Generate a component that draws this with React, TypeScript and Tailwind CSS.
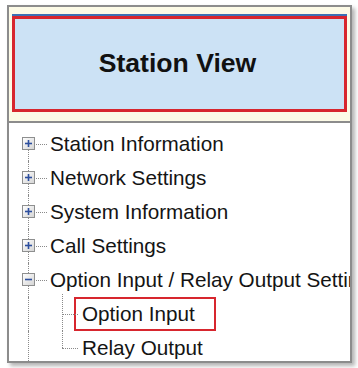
import React from "react";

type Node = { label: string; level: 0 | 1; state?: "plus" | "minus"; selected?: boolean; first?: boolean };

const nodes: Node[] = [
  { label: "Station Information", level: 0, state: "plus", first: true },
  { label: "Network Settings", level: 0, state: "plus" },
  { label: "System Information", level: 0, state: "plus" },
  { label: "Call Settings", level: 0, state: "plus" },
  { label: "Option Input / Relay Output Settings", level: 0, state: "minus" },
  { label: "Option Input", level: 1, selected: true },
  { label: "Relay Output", level: 1 },
];

const ExpandBox = ({ state }: { state: "plus" | "minus" }) => (
  <svg width="13" height="13" viewBox="0 0 13 13" className="absolute left-[13px] top-[10px]">
    <defs>
      <linearGradient id={`g-${state}`} x1="0" y1="0" x2="1" y2="1">
        <stop offset="0" stopColor="#ffffff" />
        <stop offset="1" stopColor="#d4d4d4" />
      </linearGradient>
    </defs>
    <rect x="0.5" y="0.5" width="12" height="12" fill={`url(#g-${state})`} stroke="#8e8f8f" />
    <path d="M3 6.5h7" stroke="#2d4f9e" strokeWidth="1.6" />
    {state === "plus" && <path d="M6.5 3v7" stroke="#2d4f9e" strokeWidth="1.6" />}
  </svg>
);

const TreeRow = ({ node, last }: { node: Node; last: boolean }) => (
  <div className="flex h-[34px] items-stretch">
    {/* connector gutter for top level */}
    <div className="relative w-[41px] shrink-0">
      <span
        className={`absolute left-[19px] bottom-0 border-l border-dotted border-[#8a8a8a] ${
          node.first ? "top-1/2" : "top-0"
        }`}
      />
      {node.level === 0 && (
        <>
          <span className="absolute left-[19px] top-1/2 w-[19px] border-t border-dotted border-[#8a8a8a]" />
          <ExpandBox state={node.state ?? "plus"} />
        </>
      )}
    </div>
    {node.level === 1 && (
      <div className="relative w-[32px] shrink-0">
        <span
          className={`absolute left-[12px] border-l border-dotted border-[#8a8a8a] ${
            last ? "top-0 h-1/2" : "-top-[3px] bottom-0"
          }`}
        />
        <span className="absolute left-[12px] top-1/2 w-[16px] border-t border-dotted border-[#8a8a8a]" />
      </div>
    )}
    <div className="flex min-w-0 items-center">
      <span
        className={`whitespace-nowrap text-[20.7px] leading-none text-[#141414] ${
          node.selected ? "ml-[-8px] border-2 border-[#d7262e] py-[5px] pl-[6px] pr-[19px]" : ""
        }`}
      >
        {node.label}
      </span>
    </div>
  </div>
);

export default function App() {
  return (
    <div className="h-[368px] w-[358px] bg-white pl-[7px] pt-[5px] font-['Liberation_Sans',Arial,sans-serif]">
      <div className="flex h-[358px] w-[345px] flex-col border-2 border-[#8c8c8c] bg-[#fcfae6] shadow-[3px_3px_4px_rgba(0,0,0,0.3)]">
        {/* Header button */}
        <div className="px-[3px] pt-[7px]">
          <div className="border-t-2 border-[#3d70b4]">
            <div className="flex h-[96px] items-center justify-center border-[3px] border-[#d7262e] bg-[#cce2f5]">
              <span className="mr-[4px] text-[26.6px] font-bold text-[#111]">Station View</span>
            </div>
          </div>
        </div>

        {/* Tree */}
        <div className="mt-[9px] flex-1 overflow-hidden border-t-2 border-[#8c8c8c] bg-white pt-[4px]">
          {nodes.map((n, i) => (
            <TreeRow key={n.label} node={n} last={i === nodes.length - 1} />
          ))}
        </div>
      </div>
    </div>
  );
}
